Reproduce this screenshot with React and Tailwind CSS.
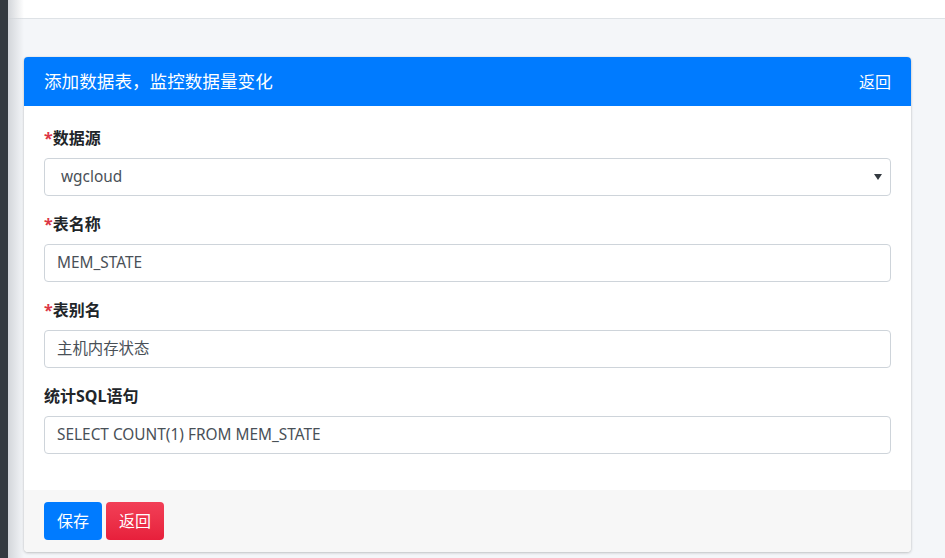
const font = { fontFamily: '"Noto Sans", "Noto Sans CJK SC", sans-serif' }

function Field({ label, required, children }) {
  return (
    <div className="mb-4">
      <label className="block mb-2 text-[16px] leading-6 font-bold text-[#212529]">
        {required && <span className="text-[#dc3545]">*</span>}
        {label}
      </label>
      {children}
    </div>
  )
}

function TextBox({ value }) {
  return (
    <div className="h-[38px] flex items-center px-3 border border-[#ced4da] rounded-[4px] bg-white text-[15.4px] text-[#495057]">
      {value}
    </div>
  )
}

export default function App() {
  return (
    <div className="flex w-full h-[558px] overflow-hidden" style={font}>
      <div className="w-[8px] shrink-0 bg-[#343a40]" />
      <div className="relative flex-1 flex flex-col bg-[#f4f6f9]">
        <div className="pointer-events-none absolute inset-y-0 left-0 w-[16px] bg-gradient-to-r from-[#d3d6da] to-transparent" />
        <div className="h-[19px] shrink-0 bg-white border-b border-[#dee2e6]" />
        <div className="pt-[38px] pl-[16px] pr-[34px]">
          <div className="bg-white rounded-[4px] shadow-[0_0_1px_rgba(0,0,0,0.2),0_1px_3px_rgba(0,0,0,0.2)] overflow-hidden">
            <div className="h-[49px] flex items-center justify-between px-5 bg-[#007bff] text-white">
              <span className="text-[17.6px]">添加数据表，监控数据量变化</span>
              <span className="text-[16px]">返回</span>
            </div>
            <div className="px-5 pt-5 pb-5">
              <Field label="数据源" required>
                <div className="h-[38px] flex items-center justify-between pl-4 pr-2 border border-[#ced4da] rounded-[4px] bg-white text-[15.4px] text-[#495057]">
                  <span>wgcloud</span>
                  <svg width="8" height="6" viewBox="0 0 8 6"><path d="M0 0h8L4 6z" fill="#343a40" /></svg>
                </div>
              </Field>
              <Field label="表名称" required>
                <TextBox value="MEM_STATE" />
              </Field>
              <Field label="表别名" required>
                <TextBox value="主机内存状态" />
              </Field>
              <Field label="统计SQL语句">
                <TextBox value="SELECT COUNT(1) FROM MEM_STATE" />
              </Field>
            </div>
            <div className="flex gap-[4px] px-5 pt-3 pb-[12px] bg-[#f7f7f7]">
              <button className="h-[38px] w-[58px] rounded-[4px] bg-[#007bff] text-white text-[16px]">保存</button>
              <button className="h-[38px] w-[58px] rounded-[4px] bg-gradient-to-b from-[#f23f57] to-[#e71f3b] text-white text-[16px]">返回</button>
            </div>
          </div>
        </div>
      </div>
    </div>
  )
}
